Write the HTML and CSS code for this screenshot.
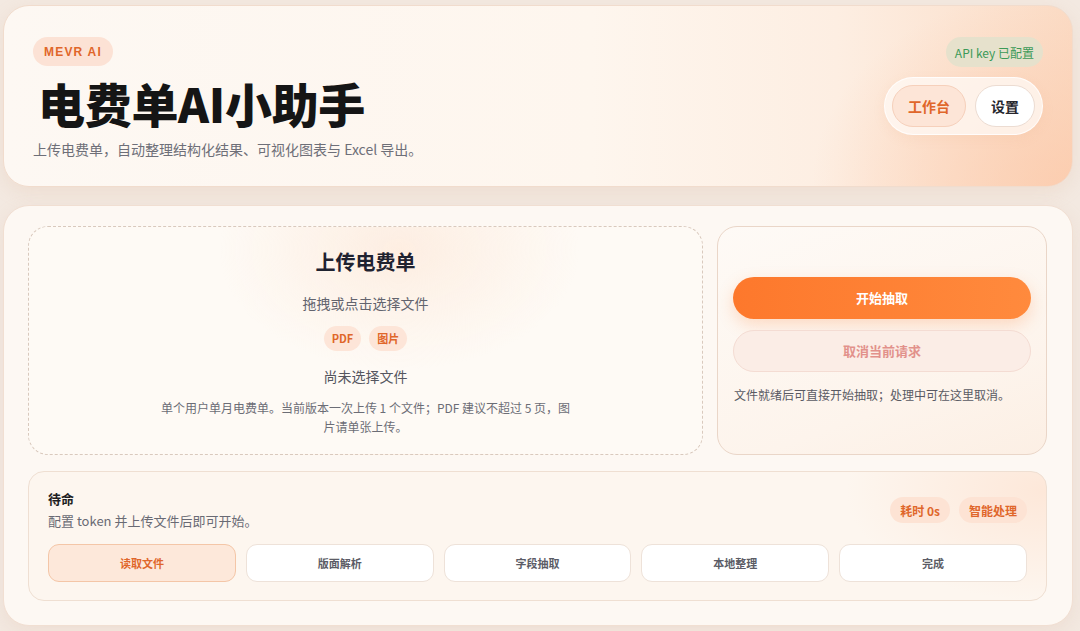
FILE: index.html
```html
<!DOCTYPE html>
<html lang="zh-CN">
<head>
<meta charset="utf-8">
<title>电费单AI小助手</title>
<link rel="stylesheet" href="styles.css">
</head>
<body>
<div class="page">
  <header class="hero">
    <div class="hero-left">
      <span class="brand-pill">MEVR AI</span>
      <h1 class="hero-title">电费单AI小助手</h1>
      <p class="hero-sub">上传电费单，自动整理结构化结果、可视化图表与 Excel 导出。</p>
    </div>
    <div class="hero-right">
      <span class="key-pill">API key 已配置</span>
      <nav class="nav-group">
        <button class="nav-btn nav-active">工作台</button>
        <button class="nav-btn">设置</button>
      </nav>
    </div>
  </header>

  <main class="main-card">
    <div class="top-row">
      <section class="dropzone">
        <h2 class="drop-title">上传电费单</h2>
        <p class="drop-hint">拖拽或点击选择文件</p>
        <div class="type-pills">
          <span class="type-pill">PDF</span>
          <span class="type-pill">图片</span>
        </div>
        <p class="drop-file">尚未选择文件</p>
        <p class="drop-note">单个用户单月电费单。当前版本一次上传 1 个文件；PDF 建议不超过 5 页，图片请单张上传。</p>
      </section>
      <section class="action-panel">
        <button class="btn-start">开始抽取</button>
        <button class="btn-cancel">取消当前请求</button>
        <p class="action-note">文件就绪后可直接开始抽取；处理中可在这里取消。</p>
      </section>
    </div>

    <section class="status-card">
      <div class="status-head">
        <div class="status-text">
          <div class="status-title">待命</div>
          <div class="status-desc">配置 token 并上传文件后即可开始。</div>
        </div>
        <div class="status-pills">
          <span class="status-pill">耗时 0s</span>
          <span class="status-pill">智能处理</span>
        </div>
      </div>
      <div class="steps">
        <div class="step step-active">读取文件</div>
        <div class="step">版面解析</div>
        <div class="step">字段抽取</div>
        <div class="step">本地整理</div>
        <div class="step">完成</div>
      </div>
    </section>
  </main>
</div>
</body>
</html>
```

FILE: styles.css
```css
* { box-sizing: border-box; }
html, body { margin: 0; padding: 0; }
body {
  background: #f3e9e1;
  font-family: "Noto Sans CJK SC", "Noto Sans", sans-serif;
  color: #1f1f24;
  width: 1080px;
  height: 631px;
  overflow: hidden;
}
.page {
  padding: 5px 7px 0 3px;
  display: flex;
  flex-direction: column;
  gap: 18px;
}

/* HERO */
.hero {
  height: 182px;
  border-radius: 26px;
  border: 1px solid #f1dccd;
  background:
    radial-gradient(ellipse 260px 200px at 100% 100%, rgba(252, 200, 168, 0.75), rgba(252, 200, 168, 0) 100%),
    linear-gradient(90deg, #fdf8f3 0%, #fef6ee 55%, #fdeee2 78%, #fbdcc6 100%);
  box-shadow: 0 6px 18px rgba(214, 170, 140, 0.18);
  padding: 31px 29px 0 29px;
  display: flex;
  justify-content: space-between;
  align-items: flex-start;
}
.hero-left { display: flex; flex-direction: column; align-items: flex-start; }
.brand-pill {
  display: inline-flex;
  align-items: center;
  height: 29px;
  padding: 0 11px;
  border-radius: 15px;
  background: #fce2d5;
  color: #e0662a;
  font-family: "Liberation Sans", "Noto Sans", sans-serif;
  font-weight: 700;
  font-size: 12px;
  letter-spacing: 1.2px;
}
.hero-title {
  margin: 7px 0 0 5px;
  font-size: 47px;
  line-height: 60px;
  font-weight: 900;
  letter-spacing: -0.3px;
  color: #151515;
}
.hero-sub {
  margin: 6px 0 0 0;
  font-size: 14px;
  line-height: 20px;
  color: #6e6f78;
}
.hero-right {
  display: flex;
  flex-direction: column;
  align-items: flex-end;
  gap: 10px;
}
.key-pill {
  display: inline-flex;
  align-items: center;
  height: 30px;
  padding: 0 9px;
  border-radius: 15px;
  background: #e6e1cc;
  color: #3c9a58;
  font-size: 12px;
}
.nav-group {
  display: flex;
  gap: 9px;
  padding: 7px;
  border-radius: 30px;
  background: rgba(255, 250, 245, 0.75);
  border: 1px solid rgba(255, 255, 255, 0.8);
  box-shadow: 0 4px 12px rgba(230, 170, 130, 0.12);
}
.nav-btn {
  height: 42px;
  padding: 0 15px;
  border-radius: 21px;
  font-family: inherit;
  font-size: 14px;
  font-weight: 700;
  border: 1px solid #ecdcd2;
  background: #ffffff;
  color: #26262d;
}
.nav-active {
  background: #fde5d7;
  border-color: #f6d0bb;
  color: #e0662a;
}

/* MAIN */
.main-card {
  height: 421px;
  border-radius: 26px;
  border: 1px solid #f1dfd2;
  background: #fdf8f3;
  box-shadow: 0 6px 18px rgba(214, 170, 140, 0.16);
  padding: 20px 25px 0 24px;
  display: flex;
  flex-direction: column;
  gap: 16px;
}
.top-row {
  display: flex;
  gap: 14px;
  height: 229px;
}
.dropzone {
  flex: 0 0 675px;
  border: 1px dashed #d9c9bd;
  border-radius: 20px;
  background:
    radial-gradient(ellipse 180px 120px at 55% 10%, rgba(253, 228, 210, 0.55), rgba(253, 228, 210, 0) 100%),
    #fefaf5;
  display: flex;
  flex-direction: column;
  align-items: center;
  justify-content: center;
  text-align: center;
  padding-top: 2px;
}
.drop-title {
  margin: 0;
  font-size: 20px;
  line-height: 28px;
  font-weight: 700;
  color: #1f2230;
}
.drop-hint {
  margin: 17px 0 0 0;
  font-size: 14px;
  line-height: 20px;
  color: #63646e;
}
.type-pills { display: flex; gap: 8px; margin-top: 13px; }
.type-pill {
  display: inline-flex;
  align-items: center;
  height: 25px;
  padding: 0 8px;
  border-radius: 13px;
  background: #fde5d8;
  color: #e0662a;
  font-size: 11px;
  font-weight: 700;
}
.drop-file {
  margin: 15px 0 0 0;
  font-size: 14px;
  line-height: 20px;
  color: #55565f;
}
.drop-note {
  margin: 12px 0 0 0;
  width: 410px;
  font-size: 12px;
  line-height: 19px;
  color: #6c6d76;
}
.action-panel {
  flex: 1;
  border: 1px solid #ead6c8;
  border-radius: 20px;
  background: linear-gradient(160deg, #fefaf6 0%, #fdf4ec 70%, #fcefe4 100%);
  padding: 0 15px 2px 15px;
  display: flex;
  flex-direction: column;
  justify-content: center;
}
.btn-start {
  height: 42px;
  border-radius: 21px;
  border: none;
  background: linear-gradient(90deg, #fd782c 0%, #ff8a3d 100%);
  color: #ffffff;
  font-family: inherit;
  font-size: 13px;
  font-weight: 700;
  box-shadow: 0 6px 16px rgba(253, 130, 60, 0.25);
}
.btn-cancel {
  margin-top: 11px;
  height: 42px;
  border-radius: 21px;
  border: 1px solid #f4dcd3;
  background: #fbede6;
  color: #e2918b;
  font-family: inherit;
  font-size: 13px;
  font-weight: 700;
}
.action-note {
  margin: 15px 0 0 1px;
  font-size: 12px;
  line-height: 16px;
  color: #595a63;
}

/* STATUS */
.status-card {
  height: 130px;
  border: 1px solid #efdfd2;
  border-radius: 16px;
  background:
    radial-gradient(ellipse 200px 110px at 100% 15%, rgba(253, 222, 202, 0.6), rgba(253, 222, 202, 0) 100%),
    #fdf6ef;
  padding: 17px 19px 0 19px;
  display: flex;
  flex-direction: column;
}
.status-head {
  display: flex;
  justify-content: space-between;
  align-items: center;
}
.status-title {
  font-size: 13px;
  line-height: 20px;
  font-weight: 700;
  color: #1d1d22;
}
.status-desc {
  font-size: 13px;
  line-height: 20px;
  color: #696a74;
  margin-top: 2px;
}
.status-pills { display: flex; gap: 9px; }
.status-pill {
  display: inline-flex;
  align-items: center;
  height: 26px;
  padding: 0 10px;
  border-radius: 13px;
  background: #fde3d4;
  color: #e0662a;
  font-size: 12px;
  font-weight: 700;
}
.steps {
  margin-top: 13px;
  display: grid;
  grid-template-columns: repeat(5, 1fr);
  gap: 10px;
}
.step {
  height: 38px;
  border-radius: 11px;
  border: 1px solid #eee2d9;
  background: #ffffff;
  color: #5b5c66;
  font-size: 11px;
  font-weight: 700;
  display: flex;
  align-items: center;
  justify-content: center;
}
.step-active {
  background: #fde8da;
  border-color: #f4c6a7;
  color: #e0662a;
}
```
